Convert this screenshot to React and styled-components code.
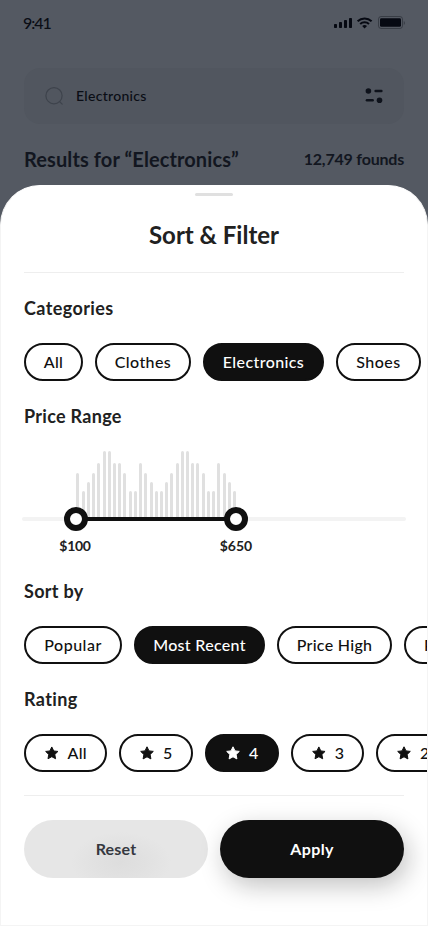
import React from "react";
import styled, { createGlobalStyle } from "styled-components";

const GlobalStyle = createGlobalStyle`
  * { box-sizing: border-box; }
  body { margin: 0; }
`;

const Screen = styled.main`
  width: 428px;
  height: 926px;
  overflow: hidden;
  display: flex;
  flex-direction: column;
  background: #545962;
  color: #0a0d15;
  font-family: Lato, sans-serif;
`;

const Backdrop = styled.div`
  height: 185px;
  flex: none;
  display: flex;
  flex-direction: column;
`;

const StatusBar = styled.header`
  height: 44px;
  padding: 1px 22px 0 23px;
  display: flex;
  align-items: center;
  justify-content: space-between;
`;

const Label = styled.span`
  display: inline-block;
  white-space: nowrap;
  font-size: ${(p) => p.$size || 16}px;
  font-weight: ${(p) => p.$weight || 500};
  letter-spacing: ${(p) => p.$track || 0}px;
  line-height: 1.2;
`;

const StatusIcons = styled.svg`
  display: block;
`;

const SearchBox = styled.div`
  height: 56px;
  margin: 24px 24px 0;
  padding: 0 20px;
  border-radius: 16px;
  display: flex;
  align-items: center;
  background: #51565f;
`;

const SearchText = styled(Label)`
  flex: 1;
  margin-left: 12px;
`;

const Results = styled.div`
  display: flex;
  align-items: center;
  justify-content: space-between;
  height: 28px;
  margin: 21px 24px 0;
  color: #121620;
`;

const Sheet = styled.section`
  height: 741px;
  flex: none;
  margin-top: auto;
  border: 1px solid #f4f4f4;
  border-top-color: #fff;
  border-radius: 40px 40px 0 0;
  background: #fff;
  color: #212121;
  padding: 7px 23px 0;
  display: flex;
  flex-direction: column;
  overflow: hidden;
`;

const Grabber = styled.div`
  width: 38px;
  height: 3px;
  flex: none;
  border-radius: 2px;
  background: #e0e0e0;
  align-self: center;
`;

const Title = styled.h1`
  margin: 24px 0 0;
  height: 30px;
  line-height: 30px;
  font-size: 24px;
  font-weight: 700;
  letter-spacing: ${(p) => p.$track}px;
  text-align: center;
`;

const Divider = styled.hr`
  width: 100%;
  height: 1px;
  flex: none;
  border: 0;
  margin: ${(p) => p.$top}px 0 0;
  background: #eee;
`;

const Heading = styled.h2`
  height: 24px;
  line-height: 24px;
  margin: ${(p) => p.$top}px 0 0;
  font-size: 18px;
  font-weight: 700;
  letter-spacing: ${(p) => p.$track}px;
`;

const ChipRow = styled.div`
  display: flex;
  gap: 12px;
  margin: 23px -23px 0 0;
  overflow: hidden;
  flex: none;
`;

const Chip = styled.button`
  width: ${(p) => p.$width}px;
  height: 38px;
  flex: none;
  display: flex;
  align-items: center;
  justify-content: ${(p) => (p.$start ? "flex-start" : "center")};
  gap: 8px;
  padding: 0 ${(p) => (p.$start ? 18 : 0)}px;
  border: 2px solid #101010;
  border-radius: 19px;
  background: ${(p) => (p.$active ? "#101010" : "#fff")};
  color: ${(p) => (p.$active ? "#fff" : "#101010")};
  font-family: inherit;
`;

const Range = styled.div`
  margin: 22px -2px 0;
  height: 104px;
  flex: none;
`;

const Histogram = styled.svg`
  display: block;
`;

const PriceRow = styled.div`
  display: flex;
  width: 237px;
  padding: 6px 0 0 30px;
  justify-content: space-between;
`;

const PriceLabel = styled(Label)`
  width: 46px;
  text-align: center;
`;

const Actions = styled.footer`
  display: grid;
  grid-template-columns: 184px 184px;
  gap: 12px;
  margin-top: 24px;
`;

const Button = styled.button`
  height: 58px;
  border: 0;
  border-radius: 29px;
  font-family: inherit;
  background: ${(p) => (p.$primary ? "#101010" : "radial-gradient(ellipse 50px 30px at 97px 42px, #dddddd, #e1e1e1 50%, #e6e6e6)")};
  color: ${(p) => (p.$primary ? "#fff" : "#35383f")};
  box-shadow: ${(p) => (p.$primary ? "4px 8px 24px rgba(16,16,16,.25)" : "none")};
`;

const BARS = [
  [76, 473], [82, 491], [87, 482], [92, 473], [97, 463], [103, 451], [108, 451],
  [113, 463], [118, 463], [123, 473], [129, 491], [134, 491], [139, 463],
  [144, 473], [150, 482], [155, 491], [160, 491], [165, 482], [170, 473],
  [176, 463], [181, 451], [186, 451], [191, 463], [196, 463], [202, 473],
  [207, 491], [212, 491], [217, 463], [223, 473], [228, 482], [233, 491],
];

const CATEGORIES = [
  { text: "All", width: 59, track: 0.4 },
  { text: "Clothes", width: 96, track: 0.4 },
  { text: "Electronics", width: 121, active: true, track: 0.4 },
  { text: "Shoes", width: 85, track: 0.5 },
];

const SORTS = [
  { text: "Popular", width: 98, track: 0.5 },
  { text: "Most Recent", width: 131, active: true, track: 0.3 },
  { text: "Price High", width: 115, track: 0.3 },
  { text: "Price Low", width: 112, start: true, track: 0.3 },
];

const RATINGS = [
  { text: "All", width: 83, track: 0.3 },
  { text: "5", width: 74 },
  { text: "4", width: 74, active: true },
  { text: "3", width: 73 },
  { text: "2", width: 74 },
];

function Star() {
  return (
    <svg width="16" height="16" viewBox="0 0 16 16">
      <path
        d="M8 1.8 10 5.9 14.3 6.4 11.1 9.5 11.9 13.9 8 11.8 4.1 13.9 4.9 9.5 1.7 6.4 6 5.9Z"
        fill="currentColor" stroke="currentColor" strokeWidth="1" strokeLinejoin="round"
      />
    </svg>
  );
}

function Chips({ items, star }) {
  return (
    <ChipRow>
      {items.map((c) => (
        <Chip key={c.text} $width={c.width} $active={c.active} $start={star || c.start}>
          {star && <Star />}
          <Label $track={c.track}>{c.text}</Label>
        </Chip>
      ))}
    </ChipRow>
  );
}

export default function App() {
  return (
    <Screen>
      <GlobalStyle />
      <Backdrop>
        <StatusBar>
          <Label $track={-1}>9:41</Label>
          <StatusIcons width="72" height="14" viewBox="334 16 72 14">
            <g fill="#060912">
              <rect x="334" y="24" width="3" height="4" rx=".8" />
              <rect x="339" y="22" width="3" height="6" rx=".8" />
              <rect x="344" y="20" width="3" height="8" rx=".8" />
              <rect x="349" y="18" width="3" height="10" rx=".8" />
              <rect x="380" y="18.2" width="21" height="8.6" rx="1.4" />
              <path d="M403.8 21v4c1.4-.6 1.4-3.4 0-4z" opacity=".4" />
            </g>
            <rect x="378.5" y="16.5" width="24" height="12" rx="2.6" fill="none" stroke="#060912" strokeOpacity=".35" />
            <g fill="none" stroke="#060912" strokeWidth="2">
              <path d="M357.6 21.3a10.2 10.2 0 0 1 14 0" />
              <path d="M360.2 24a6.4 6.4 0 0 1 8.8 0" />
            </g>
            <path d="M362.2 26q2.4-2 4.8 0l-2.4 2.4z" fill="#060912" />
          </StatusIcons>
        </StatusBar>
        <SearchBox>
          <svg width="20" height="20" viewBox="0 0 20 20" fill="none" stroke="#3e434c" strokeWidth="1.2" strokeLinecap="round">
            <circle cx="10" cy="9.7" r="8.1" />
            <path d="m15.7 15.7 2.5 2.4" />
          </svg>
          <SearchText $size={14} $track={0.3}>Electronics</SearchText>
          <svg width="20" height="20" viewBox="0 0 20 20" fill="#0e121b">
            <circle cx="4.4" cy="5" r="2.8" />
            <rect x="10.4" y="3.8" width="8.2" height="2.4" rx="1.2" />
            <rect x="1.7" y="13" width="8.2" height="2.4" rx="1.2" />
            <circle cx="15.5" cy="14.2" r="2.8" />
          </svg>
        </SearchBox>
        <Results>
          <Label $size={20} $weight={700} $track={0.1}>Results for “Electronics”</Label>
          <Label $weight={700} $track={-0.2}>12,749 founds</Label>
        </Results>
      </Backdrop>
      <Sheet>
        <Grabber />
        <Title $track={0}>Sort &amp; Filter</Title>
        <Divider $top={22} />
        <Heading $top={23} $track={0.4}>Categories</Heading>
        <Chips items={CATEGORIES} />
        <Heading $top={23} $track={0.3}>Price Range</Heading>
        <Range>
          <Histogram width="384" height="82" viewBox="22 450 384 82">
            <rect x="22" y="517" width="384" height="4" rx="2" fill="#f3f3f3" />
            {BARS.map(([x, y]) => (
              <path key={x} d={`M${x} 518V${y + 1.5}a1.5 1.5 0 0 1 3 0V518z`} fill="#e0e0e0" />
            ))}
            <rect x="76" y="517" width="160" height="4" fill="#101010" />
            <circle cx="76" cy="519" r="9" fill="#fff" stroke="#101010" strokeWidth="6" />
            <circle cx="236" cy="519" r="9" fill="#fff" stroke="#101010" strokeWidth="6" />
          </Histogram>
          <PriceRow>
            <PriceLabel $size={14} $weight={700} $track={-0.3}>$100</PriceLabel>
            <PriceLabel $size={14} $weight={700}>$650</PriceLabel>
          </PriceRow>
        </Range>
        <Heading $top={25} $track={0.3}>Sort by</Heading>
        <Chips items={SORTS} />
        <Heading $top={23} $track={0.4}>Rating</Heading>
        <Chips items={RATINGS} star />
        <Divider $top={23} />
        <Actions>
          <Button><Label $weight={700} $track={0.2}>Reset</Label></Button>
          <Button $primary><Label $weight={700} $track={0.4}>Apply</Label></Button>
        </Actions>
      </Sheet>
    </Screen>
  );
}
